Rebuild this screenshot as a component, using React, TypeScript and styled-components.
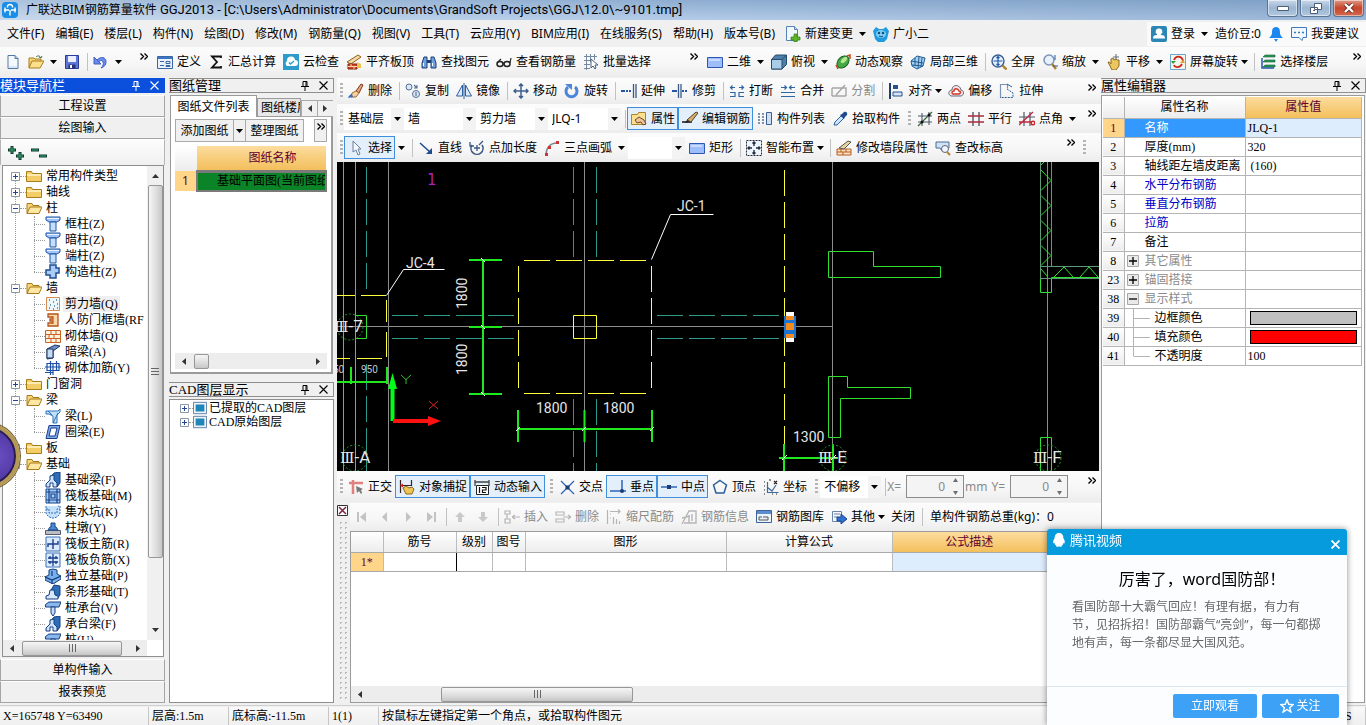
import React from "react";
import styled, { createGlobalStyle, css } from "styled-components";

const UI = `"Noto Sans", "Noto Sans CJK SC", sans-serif`;
const SONG = `"Liberation Serif", "Noto Sans CJK SC", serif`;

const Global = createGlobalStyle`
  * { box-sizing: border-box; }
  body { margin: 0; background: #f0f0f0; font: 12px/16px ${UI}; color: #000; }
  button, select, input { font: inherit; color: inherit; margin: 0; padding: 0; border: 0; background: none; border-radius: 0; }
  ul { list-style: none; margin: 0; padding: 0; }
  h1, h2, p { margin: 0; font-weight: normal; }
  svg { display: block; flex: none; }
`;

/* ---------- icons (16 x 16 grid) ---------- */

const B = "#2458a6";
const line = (d: string, c = B, w = 1.4, fill = "none") => (
  <path d={d} stroke={c} strokeWidth={w} fill={fill} />
);

const beam = (
  <>
    <path d="M5 6 9 1 15 0V11L12 15 9 8z" fill="#2c6fb8" stroke="#163f80" />
    <path d="M1 15V12L5 8V4L9 3V8L12 11V15H8V11H5V15Z" fill="#cfe4ff" stroke="#163f80" />
  </>
);
const column = (
  <>
    <path d="M1 1h14v3l-3 2H4L1 4z" fill="#9fc4f5" stroke="#1f55a5" />
    <path d="M5 6h6v9H5z" fill="#c5defc" stroke="#1f55a5" />
    <path d="M2 2.500h12" stroke="#e8f3ff" />
  </>
);

const ICONS: Record<string, React.ReactNode> = {
  app: (
    <>
      <rect width="16" height="16" rx="4" fill="#1a8de6" />
      <path d="M2 8h5M9 8h5M8 8v5.500M5.500 5.500V4.500a2.500 2 0 0 1 5 0v1M3 5.500v5M13 5.500v5" stroke="#fff" strokeWidth="1.400" fill="none" />
    </>
  ),
  fresh: (
    <>
      <path d="M3 1.500h7l3 3v10H3z" fill="#f4f9ff" stroke="#54789f" />
      <path d="M10 1.500v3h3" fill="#bcd5ee" stroke="#54789f" />
      <path d="M4 13h8" stroke="#bcd5ee" />
    </>
  ),
  open: (
    <>
      <path d="M1 14V4h5l1 1h6v3" fill="#f6d477" stroke="#a87c1b" />
      <path d="M1 14 4 7h12l-4 7z" fill="#fcdf8b" stroke="#a87c1b" />
      <path d="M8 3c2-2 4-1 5 1M14 2l-1 2-2-1" stroke="#3b7a35" fill="none" />
    </>
  ),
  save: (
    <>
      <path d="M1.500 1.500h13v13h-13z" fill="#5f76d8" stroke="#2b3c92" />
      <path d="M4 2h8v6H4z" fill="#e9efff" />
      <path d="M4.500 10.500h7v4h-7z" fill="#26347c" />
      <path d="M6 11h2v3H6z" fill="#fff" />
    </>
  ),
  undo: (
    <>
      <path d="M4 6c4-4 9-3 9 2 0 3-2 5-5 6 2-2 3-4 2-6-1-2-3-2-4 0z" fill="#6c8cec" stroke="#3d5fc4" />
      <path d="M1 3v7h7z" fill="#6c8cec" stroke="#3d5fc4" />
    </>
  ),
  define: (
    <>
      <path d="M.5 2.500h15v12H.5z" fill="#e8f1fc" stroke="#3b66a6" />
      <path d="M1 3h14v2H1z" fill="#3b76c4" />
      <path d="M3 7.500h4M3 11.500h4M9 7.500h4v2H9zM9 11.500h4v1H9z" stroke="#3b66a6" fill="none" />
    </>
  ),
  sigma: line("M13 4V2.500H4L9 8l-5 5.500h9V12", "#111", 1.800),
  cloud: (
    <>
      <path d="M0 0h16v16H0z" fill="#2e9cca" />
      <path d="M4 12a3 3 0 0 1 0-5 4 4 0 0 1 8-1 3 3 0 0 1 0 6z" fill="#fff" />
      {line("m6 8.500 1.500 1.500L11 7", "#2e9cca")}
    </>
  ),
  slab: (
    <>
      <path d="M1 8 12 1l3 2L5 10z" fill="#f4d9a4" stroke="#93611a" />
      <path d="M2 10h9v5H2z" fill="#d1432b" stroke="#7d2415" />
      <path d="M2 12.500h9M5 10v2M8 12v3" stroke="#ffd9a0" />
      <path d="m11 8 4 2v4h-4z" fill="#f1c04e" />
    </>
  ),
  binoc: (
    <>
      <path d="M1 14V9l2-6h3v11zM15 14V9l-2-6h-3v11z" fill="#6f9fdc" stroke="#1b3f77" />
      <path d="M6 6h4v3H6z" fill="#1b3f77" />
      <path d="M2.500 12V9M11.500 12V9" stroke="#fff" />
    </>
  ),
  glasses: (
    <>
      <ellipse cx="4" cy="10" rx="3" ry="2.500" fill="none" stroke="#222" strokeWidth="1.500" />
      <ellipse cx="11" cy="10" rx="3" ry="2.500" fill="none" stroke="#222" strokeWidth="1.500" />
      {line("M7 9h1M14 9 15 4M1 9 5 5", "#222", 1.200)}
    </>
  ),
  batch: (
    <>
      {line("M1 2.500h13M1 6.500h7M1 10.500h6M1 14.500h6M3.500 0v16M7.500 0v8M11.500 0v6", "#7687a0", 1)}
      <path d="M8 5v9l2-2 2 3 1-1-1-3h3z" fill="#fff" stroke="#49607f" />
    </>
  ),
  plane: (
    <>
      <path d="M.5 3.500h15v10H.5z" fill="#9dbdfb" stroke="#2e57b4" />
      <path d="M2 5h11v2H2z" fill="#c9dbff" />
    </>
  ),
  cube: (
    <>
      <path d="M.5 5.500 4.500 1h11v9.500L11 15H.5z" fill="#4d7fa9" stroke="#274b6c" />
      <path d="M.5 5.500H11V15H.5z" fill="#a9cde6" stroke="#274b6c" />
      <path d="M11 5.500 15.500 1" stroke="#274b6c" />
    </>
  ),
  orbit: (
    <>
      <ellipse cx="8" cy="8" rx="5" ry="7" transform="rotate(45 8 8)" fill="#43a845" stroke="#1c6323" />
      <ellipse cx="9" cy="6" rx="2" ry="4" transform="rotate(45 9 6)" fill="#b6e78f" />
      <path d="M3 15 1 11M12 2l3-1v4" stroke="#c84a1a" fill="none" strokeWidth="1.500" />
    </>
  ),
  cube3: (
    <>
      <path d="m1 7 6-5 8 2-2 8-6 3-5-3z" fill="#a6d2f0" stroke="#205b93" />
      {line("M5 4v8M9 3 8 14M12 4l-1 9M1 7l12 2M2 11l11 1", "#205b93", 1)}
    </>
  ),
  full: (
    <>
      <circle cx="7" cy="7" r="6" fill="#e3f0ff" stroke="#3c5f93" strokeWidth="1.400" />
      {line("M7 2.500v9M2.500 7h9M5.500 4 7 2.500 8.500 4M5.500 10 7 11.500 8.500 10", "#2458a6", 1.200)}
      {line("m11.500 11.500 4 4", "#b3822c", 2.400)}
    </>
  ),
  zoom: (
    <>
      <circle cx="7" cy="6" r="5" fill="#e6f1fc" stroke="#7e94b4" strokeWidth="1.500" />
      {line("m10 10 4 5", "#b3822c", 2.400)}
      {line("M13 1v5M11 12h5", B, 1)}
    </>
  ),
  hand: (
    <>
      <path d="M2 8c2 0 2 1 3 2V5l2-1 1 2 2-1 1 1h2v6l-3 4H6z" fill="#ecc65e" stroke="#8c6a1b" />
      {line("M10 0v6M7 3h6", "#5d6d82", 1)}
    </>
  ),
  screen: (
    <>
      <path d="M.5.500h15v15H.5z" fill="#f2f8e9" stroke="#6ea2cf" />
      {line("M4 6c2-5 8-4 9 1", "#d12828", 1.800)}
      {line("M12 10c-2 4-7 4-8 1", "#d12828", 1.800)}
      <path d="M1 7h5l-3 3z" fill="#2f9d3f" />
      <path d="M10 9h5l-2-3z" fill="#e59a2a" />
    </>
  ),
  floors: (
    <>
      <path d="M5 1h10v2H3zM5 6h10v2H3zM5 11h10v2H3z" fill="#2a9a58" stroke="#14603a" strokeWidth=".6" />
      <path d="M2 4v10h12" stroke="#2458a6" fill="none" strokeWidth="1.500" />
    </>
  ),
  docplus: (
    <>
      <path d="M1.500 .5h8l3 3v11h-11z" fill="#f0f8ff" stroke="#5683b3" />
      <path d="M9.500 .5v3h3" fill="#bcd5ee" stroke="#5683b3" />
      <path d="M9 8h3v3h3v3h-3v2H9v-2H6v-3h3z" fill="#5eb52a" stroke="#2f7a11" strokeWidth=".7" />
    </>
  ),
  mascot: (
    <>
      <path d="M0 5 3 1l3 2h4l3-2 3 4-2 8-3 3H5l-3-3z" fill="#219be0" />
      <ellipse cx="8" cy="8" rx="5" ry="4" fill="#7ccdf5" />
      <circle cx="6" cy="7" r="1.200" fill="#124a76" />
      <circle cx="10" cy="7" r="1.200" fill="#124a76" />
      {line("M6 10c1 1 3 1 4 0", "#124a76", 1)}
    </>
  ),
  user: (
    <>
      <rect width="16" height="16" rx="2" fill="#2b86b5" />
      <path d="M8 2.500a3 3 0 0 1 2 5.500v1c3 0 4 1 4 3.500H2C2 10 3 9 6 9V8a3 3 0 0 1 2-5.500z" fill="#fff" />
    </>
  ),
  bell: <path d="M8 1c4 0 4 4 4 6s1 3 3 5H1c2-2 3-3 3-5s0-6 4-6zM6 13h4l-2 3z" fill="#1a87ee" />,
  chat: (
    <>
      <path d="M.5 1.500h15v10H12l-1 3-3-3H.5z" fill="#f2f8ff" stroke="#3f79bd" />
      {line("M3 6.500h2M7 6.500h2M11 6.500h2", "#3f79bd", 1.500)}
    </>
  ),
  erase: (
    <>
      <path d="m8 8 5-7 2 1-4 8z" fill="#e9a47d" stroke="#7c3518" />
      <path d="m4 10 4-2 3 2-3 4H3z" fill="#f5d3a1" stroke="#a2672d" />
      <path d="M0 15c1-3 3-4 4-4l1 3z" fill="#356fc0" />
    </>
  ),
  copy: (
    <>
      <circle cx="4" cy="4" r="3" fill="#dce8f5" stroke="#536f94" />
      <circle cx="11" cy="11" r="3.500" fill="#dce8f5" stroke="#536f94" />
      {line("M9 2l3 3M12 2v3H9M11 9v4", "#536f94", 1.100)}
    </>
  ),
  mirror: (
    <>
      <path d="M6.500 2v11h-6zM9.500 2v11h6z" fill="#dcebfb" stroke="#2c5f9e" />
      {line("M8 0v16", "#2c5f9e", 1)}
    </>
  ),
  move: line("M8 1v14M1 8h14M6 3l2-2 2 2M6 13l2 2 2-2M3 6 1 8l2 2M13 6l2 2-2 2", "#3d5f8f", 1.500),
  rotate: (
    <>
      {line("M4 4a5.500 5.500 0 1 0 7 0", "#4c86d9", 3)}
      <path d="M1 1h7v6z" fill="#4c86d9" />
    </>
  ),
  extend: (
    <>
      {line("M0 8h4M5 8h2M8 8h2", B, 2)}
      {line("M12.500 1v14M15 1v14", "#3b5a86", 1.300)}
    </>
  ),
  trim: (
    <>
      {line("M0 8h5M10 8h2M13 8h2", B, 2)}
      {line("M6.500 1v14M9 1v14", "#3b5a86", 1.300)}
    </>
  ),
  brk: (
    <>
      {line("M1 9.500h5v4H1M15 9.500h-5v4h5", "#2f66a6", 1.200)}
      {line("M2 4.500h4M10 4.500h4M3.500 2.500l-2 2 2 2M12.500 2.500l2 2-2 2", "#2f66a6", 1.200)}
    </>
  ),
  merge: (
    <>
      {line("M1 9.500h14M1 13.500h14", "#2f66a6", 1.200)}
      {line("M1 4.500h5M10 4.500h5M4.500 2.500l2 2-2 2M11.500 2.500l-2 2 2 2", "#2f66a6", 1.200)}
    </>
  ),
  split: line("M1 5h10M1 13h14M1 5v8M5 12 14 2M11 5h4v8", "#a6a6a6", 1.400),
  align: (
    <>
      {line("M2 0v16", "#1f3f73", 2)}
      <path d="M5 2h5v4H5z" fill="#29518f" />
      <path d="M5 9h9v4H5z" fill="#d7e6f7" stroke="#29518f" />
    </>
  ),
  offset: (
    <>
      <path d="M3 13c-4-2-2-6 1-6 0-6 8-6 9 0 4 1 3 5 0 6z" fill="#fbe3e0" stroke="#5d6c85" />
      <path d="M5 11c-2-1-1-3 1-3 0-3 4-3 5 0 2 0 2 2 0 3z" fill="#fff" stroke="#d0362c" strokeWidth="1.400" />
    </>
  ),
  stretch: (
    <>
      {line("M1.500 14.500v-13h7v4", "#7d93b3", 1.200)}
      <path d="M8 6l6 4v4.500H1" stroke="#2c5f9e" fill="none" strokeDasharray="2 1" />
      <path d="M8 1l5 3" stroke="#2c5f9e" fill="none" />
    </>
  ),
  prop: (
    <>
      <path d="M.5 3.500h6l1-2h7v12H.5z" fill="#fbe08f" stroke="#b0832b" />
      <path d="m4 9 4-3 5 3 2 4-3 1-2-3-4 1z" fill="#f3c39b" stroke="#6c4a24" />
    </>
  ),
  edit: (
    <>
      <path d="M0 11h10" stroke="#222" strokeWidth="1.600" />
      <path d="m5 9 9-8 2 1-7 9z" fill="#d8b06c" stroke="#4c4030" />
      <path d="m3 12 2-3 3 2z" fill="#222" />
    </>
  ),
  list: (
    <>
      {line("M1 3h2M1 6h2M1 9h2M1 12h2M5 3h2M5 6h2M5 9h2M5 12h2", "#5a7396", 1.600)}
      <path d="M9.500 1.500h5v12h-5z" fill="#cfe0f5" stroke="#3d5f8f" />
    </>
  ),
  pick: (
    <>
      <path d="m2 14 1-3 6-6 3 2-7 7z" fill="#cde4fa" stroke="#2c5f9e" />
      <path d="m8 4 2-1 2-2c2-1 4 1 3 3l-2 2-1 2z" fill="#1e4b8d" />
    </>
  ),
  twopt: (
    <>
      {line("M5 2v13M12 1v13M1 5h14M1 11h14", "#4e5a6b", 1.100)}
      {line("M1 15 15 1", "#3b6c36", 1.300)}
      <circle cx="5" cy="11" r="1.500" fill="#111" />
      <circle cx="12" cy="4" r="1.500" fill="#111" />
    </>
  ),
  par: (
    <>
      {line("M5 1v14M11 1v14", "#4e5a6b", 1.400)}
      {line("M0 5h16M0 11h16", "#b02b3e", 1.400)}
    </>
  ),
  ang: (
    <>
      {line("M5 1v14M11 1v14M0 6h16", "#4e5a6b", 1.200)}
      {line("M0 14 14 1M0 11h12", "#c0283b", 1.300)}
      <circle cx="14" cy="12" r="1.800" fill="none" stroke="#d12828" strokeWidth="1.500" />
    </>
  ),
  select: <path d="M5 1v11l3-2 2 5 2-1-2-5h3z" fill="#f5f9ff" stroke="#6a7f9c" />,
  ray: (
    <>
      {line("M2 3 12 12", "#1e4b8d", 1.500)}
      <path d="M14 8v6H8z" fill="#1e4b8d" />
    </>
  ),
  arclen: (
    <>
      {line("M3 5a6 6 0 1 0 10 0", "#3b5a86", 1.600)}
      {line("M1 2v4h4M8 5v6M5 8h6M10 5l4-4", "#3b5a86", 1.300)}
    </>
  ),
  arc: (
    <>
      {line("M2 15C2 8 6 3 13 3", "#7c8492", 1.500)}
      <path d="M1 13h3v3H1zM4 6h3v3H4zM12 1h3v3h-3z" fill="#c93434" />
    </>
  ),
  smart: (
    <>
      <path d="M.5.500h15v15H.5z" fill="#eef5fd" stroke="#222c3d" strokeDasharray="2 1" />
      {line("M8 2v4M8 10v4M2 8h4M10 8h4M6.500 3.500 8 2l1.500 1.500M6.500 12.500 8 14l1.500-1.500M3.500 6.500 2 8l1.500 1.500M12.500 6.500 14 8l-1.500 1.500", "#222c3d", 1.400)}
    </>
  ),
  wall: (
    <>
      <path d="M1 9h14v6H1z" fill="#ffe3c8" stroke="#b55a1a" />
      <path d="M1 12h14M5 9v3M10 9v3M7 12v3" stroke="#b55a1a" />
      <path d="m3 8 9-7 3 1-7 7z" fill="#e9d49d" stroke="#555" />
    </>
  ),
  mark: (
    <>
      <path d="M1 2h13v6H9L7 11 5 8H1z" fill="#cfe2f7" stroke="#4b6c99" />
      <circle cx="10" cy="9" r="3.500" fill="#eef6ff" stroke="#667" />
      {line("m12 12 3 3", "#b3822c", 2)}
    </>
  ),
  ortho: (
    <>
      {line("M1 4h14M5 1v14", "#e28080", 2.500)}
      <path d="m8 7 1 7 2-2 2 3 1-1-1-3 2-1z" fill="#777" />
    </>
  ),
  snap: (
    <>
      {line("M1.500 1v13M12.500 1v6M1 6.500h11", "#3b2020", 1.200)}
      <path d="m4 9 3-2 3 2 3-1 2 2-2 5H7z" fill="#efc653" stroke="#8c6a1b" />
      <path d="m1 6.500 3-2v4z" fill="#c22" />
    </>
  ),
  dyn: (
    <>
      {line("M1 1v6M15 1v6M1 3h14", "#444", 1.300)}
      <path d="M2.500 6.500h12v9h-12z" fill="#fff" stroke="#222" />
      {line("M5.500 8v6M8 8.500h4v2.500H8.500v2.500H12", "#111", 1.200)}
    </>
  ),
  cross: (
    <>
      {line("m2 2 13 13M15 2 2 15", "#2f66b8", 1.300)}
      <path d="M6.500 6.500h4v4h-4z" fill="#1d3c77" />
    </>
  ),
  perp: (
    <>
      {line("M0 12h16M12 1v11", "#2f66b8", 1.500)}
      <circle cx="12" cy="12" r="2" fill="#1d3c77" />
    </>
  ),
  mid: (
    <>
      {line("M0 8h16", "#2f66b8", 1.500)}
      <path d="M6 6h4v4H6z" fill="#1d3c77" />
    </>
  ),
  vertex: line("M8 1.500 14.500 6 12 14H4L1.500 6z", "#2c5f9e", 1.500),
  coord: (
    <>
      {line("M4.500 3v10.500h11M4 8l5 4 4-6", "#3d6a9e", 1.200)}
      {line("M1 3h1M1 7h1M1 11h1M1 15h1M6 1h2M11 2l3 3M14 2l-3 3M9 15h1M13 15h1", "#222", 1.200)}
    </>
  ),
  first: <path d="M3 3h2v10H3zM12 3v10L6 8z" fill="#c3c3c3" />,
  prev: <path d="M10 3v10L5 8z" fill="#c3c3c3" />,
  next: <path d="M6 3v10l5-5z" fill="#c3c3c3" />,
  last: <path d="M4 3v10l6-5zM11 3h2v10h-2z" fill="#c3c3c3" />,
  up: <path d="m8 3 5 5h-3v5H6V8H3z" fill="#c9c9c9" />,
  down: <path d="m8 13 5-5h-3V3H6v5H3z" fill="#c9c9c9" />,
  insert: line("M1 2h5v3H1zM1 10h5v4H1zM8 8h8M8 8l3-2M8 8l3 2M3 5v5", "#b5b5b5", 1.200),
  remove: line("M1 3h8v3H1zM1 10h8v3H1zM8 8h8M13 6l3 2-3 2", "#b5b5b5", 1.200),
  scale: line("M1.500 1v14M4 5h1M4 9h1M7.500 8v7M10.500 10v5M13.500 12v3M4 2.500h10M12 .5l2 2-2 2", "#b5b5b5", 1.200),
  info: line("M1 15 8 2h7v12H8V6M1 9l8-2M3 14h5M11 5v7", "#b5b5b5", 1.400),
  lib: (
    <>
      <path d="M.5 1.500h15v12H.5z" fill="#eaf2fb" stroke="#3c6299" />
      <path d="M1 2h14v3H1z" fill="#5b8ccd" />
      {line("M3 11V8h3M7 8h5v3M3 11h9", "#555", 1)}
    </>
  ),
  other: (
    <>
      <path d="M1.500 2.500h9v10h-9z" fill="#f4f8fd" stroke="#6b84a8" />
      {line("M3 5h6M3 8h4", "#6b84a8", 1)}
      <path d="M6 8h4V5l6 5-6 5v-3H6z" fill="#2f70d0" stroke="#1b4690" />
    </>
  ),
  qq: <path d="M8 0c4 0 5 3 5 6 2 3 2 5 1 6l-1-1c0 2-1 3-2 3 2 2-2 2-3 1-1 1-5 1-3-1-1 0-2-1-2-3l-1 1c-1-1-1-3 1-6 0-3 1-6 5-6z" fill="#fff" />,
  star: <path d="m8 1 2 5 5 .5-4 3.500 1.500 5L8 12l-4.500 3L5 10 1 6.500 6 6z" fill="none" stroke="#fff" strokeWidth="1.600" />,
  folder: (
    <>
      <path d="M.5 13.500v-10h5l1 2h9v8z" fill="#f3cd66" stroke="#a87c1b" />
      <path d="M1 6h14v2H1z" fill="#fdebb0" />
    </>
  ),
  folderOpen: (
    <>
      <path d="M1 13.500v-10h5l1 2h6v2" fill="#f6d477" stroke="#a87c1b" />
      <path d="m1 13.500 3-6.500h12l-3 6.500z" fill="#fde7a2" stroke="#a87c1b" />
    </>
  ),
  column,
  beam,
  shape: <path d="M5 1h6v3h3v5h-3v5H5v-3H1V6h4z" fill="#a9ccf7" stroke="#1f4d92" strokeWidth="1.500" />,
  shear: (
    <>
      <path d="M1.500 1.500h13v13h-13z" fill="#edf6f8" stroke="#d98b4e" />
      {line("M4 4h1M8 6h1M11 4h1M5 9h1M9 10h1M12 8h1M4 12h1M8 13h1M12 12h1", "#3d7c93", 1.300)}
    </>
  ),
  door: <path d="M3 2h10v12H3v-3h5V9H5V7h3V5H3z" fill="#ffd5ae" stroke="#b0561a" strokeWidth="1.300" />,
  brick: (
    <>
      <path d="M.5 2.500h15v12H.5z" fill="#fff0e0" stroke="#c8641e" />
      <path d="M1 6.500h14M1 10.500h14M6 3v3M11 3v3M4 7v3M9 7v3M6 11v3M11 11v3" stroke="#c8641e" />
    </>
  ),
  hidden: (
    <>
      <path d="m2 5 8-4 5 1-7 5v7l-6 1z" fill="#6c8fc6" stroke="#1d3461" />
      <path d="M2 5h6v9H2z" fill="#c7dbf5" stroke="#1d3461" />
    </>
  ),
  rebarwall: line("M2 3.500h12v7H2zM0 7h16M5.500 1v14M11.500 1v10M8 4v11M0 12.500h8", "#1b4fa8", 1.200),
  beamL: (
    <>
      <path d="M1 3h12l2-2v3l-3 3v8H8V8L4 6H1z" fill="#bfe0fb" stroke="#2c72b5" />
      {line("m3 3 4 4M8 15l5-10", "#2c72b5", 1)}
    </>
  ),
  ring: <path d="M4 1.500h11l-3 13H1zM6 4h6l-2 8H4z" fillRule="evenodd" fill="#7fa8e6" stroke="#183f8c" />,
  raft: (
    <>
      <path d="M1 1h14v14H1z" fill="#a6cdf7" stroke="#14418a" />
      {line("M4 1v14M12 1v14M1 4h14M1 12h14M6 6h4v4H6z", "#14418a", 1.200)}
    </>
  ),
  pit: <path d="M1 2v7c1 3 4 5 7 5s6-2 7-5V2h-2M1 5h3v4h8V5h3" fill="#c6e2fb" stroke="#2f6fb8" strokeDasharray="2 1" />,
  pier: (
    <>
      <path d="M.5 10.500h15v4H.5z" fill="#b8bdc6" stroke="#555d6b" />
      <path d="m3 10 2-3h1V3h4v4h1l2 3z" fill="#4b89d6" stroke="#174587" />
    </>
  ),
  rebarM: (
    <>
      <path d="M1 1h14v14H1z" fill="#dbeafc" stroke="#3a6fb8" />
      {line("M8 3v10M3 11V8h10V5", "#1b3f8a", 1.400)}
    </>
  ),
  rebarN: (
    <>
      <path d="M1 1h14v14H1z" fill="#dbeafc" stroke="#3a6fb8" />
      {line("M8 2v12M3 6h10M3 10h10M5 4v3M11 4v3M5 9v3M11 9v3", "#1b3f8a", 1.300)}
    </>
  ),
  single: (
    <>
      <path d="m0 9 4-2V2l4-1 4 1v4l4 2v3l-8 5-8-4z" fill="#77b0ea" stroke="#123b7c" />
      {line("m0 9 7 3 9-4M7 12v4M7 3v5", "#123b7c", 1.200)}
    </>
  ),
  strip: (
    <>
      <path d="M5 8 9 1l6 1v9l-3 4z" fill="#2c6fb8" stroke="#163f80" />
      <path d="M1 15v-3l3-1 1-5h4l1 5 3 1v3z" fill="#d5e8ff" stroke="#163f80" />
    </>
  ),
  pile: (
    <>
      <path d="M.5 4.500 4 2h12l-2 5H.5z" fill="#88b8ee" stroke="#163f80" />
      <path d="M6 7h4v6l-2 3-2-3z" fill="#bfdcff" stroke="#163f80" />
    </>
  ),
  layer: (
    <>
      <path d="M.5 1.500h15v13H.5z" fill="#eef3fa" stroke="#51719c" />
      <path d="M3 4h10v8H3z" fill="#1f86b8" />
    </>
  ),
  plusplus: (
    <>
      {line("M0 5h8M4 1v8M8 11h8M12 7v8", "#0b3b2e", 3)}
      {line("M1 5h6M4 2v6M9 11h6M12 8v6", "#38a86b", 1)}
    </>
  ),
  minusminus: (
    <>
      {line("M0 5h8M8 11h8", "#0b3b2e", 3)}
      {line("M1 5h6M9 11h6", "#38a86b", 1)}
    </>
  ),
};

const Icon = ({ name, size = 16 }: { name: string; size?: number }) => (
  <svg width={size} height={size} viewBox="0 0 16 16" aria-hidden="true">
    {ICONS[name]}
  </svg>
);

const Down = () => (
  <svg width="7" height="4" viewBox="0 0 7 4" aria-hidden="true"><path d="M0 0h7L3.500 4z" fill="#000" /></svg>
);

const Cross = ({ color = "#000" }: { color?: string }) => (
  <svg width="9" height="9" viewBox="0 0 9 9" aria-hidden="true"><path d="m.5.500 8 8m0-8-8 8" stroke={color} strokeWidth="1.100" /></svg>
);

const Pin = ({ color = "#000" }: { color?: string }) => (
  <svg width="8" height="10" viewBox="0 0 8 10" aria-hidden="true"><path d="M2 .5h4v5H2zM0 5.500h8M4 6v4M5 1v4" stroke={color} fill="none" /></svg>
);

/* ---------- frame ---------- */

const Frame = styled.div`
  height: 100vh;
  display: flex;
  flex-direction: column;
  overflow: hidden;
  background: #f0f0f0;
  white-space: nowrap;
`;

const TitleBar = styled.header`
  height: 20px;
  flex: none;
  display: flex;
  align-items: center;
  gap: 8px;
  padding: 0 2px;
  background: linear-gradient(90deg, rgba(255, 255, 255, 0.25), transparent 50%, rgba(60, 100, 150, 0.2)),
    linear-gradient(#8eadd1, #b4cce8);
`;

const TitleText = styled.h1`
  flex: 1;
  font-size: 12px;
  line-height: 16px;
  span { font-family: Roboto, "Noto Sans", sans-serif; font-size: 13px; }
`;

const WindowButtons = styled.div`
  display: flex;
  gap: 2px;
  align-self: flex-start;
`;

const WinButton = styled.button<{ $danger?: boolean }>`
  width: 31px;
  height: 17px;
  display: flex;
  align-items: center;
  justify-content: center;
  border: 1px solid #5c7592;
  border-top: 0;
  border-radius: 0 0 4px 4px;
  box-shadow: inset 0 0 0 1px rgba(255, 255, 255, 0.5);
  background: ${(p) => (p.$danger ? "linear-gradient(#e09a86, #c5452b 50%, #d2694f)" : "linear-gradient(#c9d9eb, #9cb5d1 50%, #b2c8e0)")};
`;

const MenuBar = styled.nav`
  height: 27px;
  flex: none;
  display: flex;
  align-items: center;
  padding-left: 2px;
`;

const MenuItem = styled.button`
  padding: 0 5px;
  margin-right: 1px;
  line-height: 20px;
`;

const Account = styled.div`
  margin-left: auto;
  height: 24px;
  display: flex;
  align-items: center;
  padding-right: 4px;
  background: #fafafa;
`;

/* ---------- toolbars ---------- */

const ToolbarLine = styled.div`
  height: 30px;
  flex: none;
  display: flex;
`;

const barFill = css`
  display: flex;
  align-items: center;
  background: linear-gradient(#fcfcfc, #f6f6f6 60%, #ececec);
  overflow: hidden;
`;

const Bar = styled.div<{ $w?: number; $pad?: number }>`
  ${barFill}
  ${(p) => (p.$w ? `width: ${p.$w}px; flex: none;` : "flex: 1; min-width: 0;")}
  height: 30px;
  padding-left: ${(p) => p.$pad ?? 0}px;
`;

const DockBar = styled.div<{ $h: number; $end?: number }>`
  ${barFill}
  flex: none;
  height: ${(p) => p.$h}px;
  padding-right: ${(p) => p.$end ?? 0}px;
`;

const ToolButton = styled.button<{ $active?: boolean; $off?: boolean }>`
  flex: none;
  display: flex;
  align-items: center;
  gap: 4px;
  height: 23px;
  padding: 0 3px 0 4px;
  ${(p) => p.$off && "color: #8a8a8a;"}
  ${(p) => p.$active && css`
    background: #e3effb;
    box-shadow: inset 0 0 0 1px #3f8fdc;
  `}
`;

const Tool = ({ icon, active, off, children, label }: { icon?: string; active?: boolean; off?: boolean; children?: React.ReactNode; label?: string }) => (
  <ToolButton type="button" $active={active} $off={off} aria-label={label}>
    {icon && <Icon name={icon} />}
    {children && <span>{children}</span>}
  </ToolButton>
);

const Total = styled.span`
  padding-left: 6px;
`;

const CaretButton = styled.button<{ $tight?: boolean }>`
  flex: none;
  height: 23px;
  display: flex;
  align-items: center;
  width: ${(p) => (p.$tight ? 9 : 13)}px;
  padding-left: ${(p) => (p.$tight ? 0 : 3)}px;
`;

const Caret = ({ tight }: { tight?: boolean }) => (
  <CaretButton type="button" $tight={tight} aria-label="更多选项"><Down /></CaretButton>
);

const Sep = styled.span`
  flex: none;
  width: 1px;
  height: 18px;
  margin: 0 1px 0 4px;
  background: #c2c2c2;
`;

const Grip = styled.span<{ $mid?: boolean }>`
  flex: none;
  width: 3px;
  height: 16px;
  margin: ${(p) => (p.$mid ? "0 2px 0 5px" : "0 1px 0 3px")};
  background: repeating-linear-gradient(#b4b4b4 0 2px, transparent 2px 4px);
`;

const MoreButton = styled.button`
  align-self: flex-start;
  margin: 5px 5px 0 auto;
  width: 8px;
  height: 8px;
`;

const Chevrons = () => (
  <svg width="8" height="7" viewBox="0 0 8 7" aria-hidden="true"><path d="m.5.500 3 3-3 3M4.500.500l3 3-3 3" stroke="#000" strokeWidth="1.400" fill="none" /></svg>
);

const More = () => (
  <MoreButton type="button" aria-label="展开工具栏"><Chevrons /></MoreButton>
);

const ComboBox = styled.label<{ $w: number }>`
  flex: none;
  position: relative;
  display: flex;
  align-items: center;
  justify-content: flex-end;
  width: ${(p) => p.$w}px;
  height: 22px;
  padding-right: 3px;
  background: linear-gradient(90deg, #fff calc(100% - 13px), #f3f3f3 0);
  select {
    position: absolute;
    inset: 0;
    width: 100%;
    padding-left: 4px;
    appearance: none;
    line-height: 20px;
  }
`;

const Combo = ({ w, value, label }: { w: number; value: string; label: string }) => (
  <ComboBox $w={w}>
    <select aria-label={label} defaultValue={value}><option>{value}</option></select>
    <Down />
  </ComboBox>
);

const Axis = styled.label`
  flex: none;
  display: flex;
  align-items: center;
  gap: 5px;
  color: #8a8a8a;
`;

const SpinBox = styled.span`
  display: flex;
  align-items: center;
  gap: 7px;
  width: 58px;
  height: 23px;
  border: 1px solid #8b8b8b;
  background: #f4f4f4;
  padding: 0 4px;
  input { width: 34px; text-align: right; }
`;

const Spin = ({ label }: { label: string }) => (
  <Axis>
    {label}
    <SpinBox>
      <input type="text" defaultValue="0" />
      <svg width="7" height="17" viewBox="0 0 7 17"><path d="M1 4 3.500 0 6 4zM1 13l2.500 4L6 13z" fill="#6e6e6e" /></svg>
    </SpinBox>
  </Axis>
);

const Unit = styled.span`
  color: #8a8a8a;
  margin: 0 4px 0 1px;
`;

/* ---------- panels ---------- */

const Main = styled.main`
  flex: 1;
  min-height: 0;
  display: flex;
  padding-top: 1px;
`;

const Column = styled.section<{ $w?: number; $gap?: number }>`
  position: relative;
  display: flex;
  flex-direction: column;
  ${(p) => (p.$w ? `width: ${p.$w}px; flex: none;` : "flex: 1; min-width: 0;")}
  margin-right: ${(p) => p.$gap ?? 0}px;
  padding-bottom: 2px;
`;

const Spacer = styled.div`
  flex: 1;
`;

const PanelHead = styled.div<{ $blue?: boolean }>`
  flex: none;
  height: 15px;
  display: flex;
  align-items: center;
  gap: 10px;
  padding-right: 5px;
  border: 1px solid ${(p) => (p.$blue ? "#0a50dc" : "#8f8f8f")};
  border-left: 0;
  background: ${(p) => (p.$blue ? "#0a50dc" : "#f0f0f0")};
  color: ${(p) => (p.$blue ? "#fff" : "#000")};
  margin-bottom: 2px;
  h2 { flex: 1; font: 13px/13px ${SONG}; }
  button { display: flex; }
`;

const Head = ({ title, blue }: { title: string; blue?: boolean }) => (
  <PanelHead $blue={blue}>
    <h2>{title}</h2>
    <button type="button" aria-label="固定"><Pin color={blue ? "#fff" : "#000"} /></button>
    <button type="button" aria-label="关闭"><Cross color={blue ? "#fff" : "#000"} /></button>
  </PanelHead>
);

const NavButton = styled.button`
  flex: none;
  height: 22px;
  border: 1px solid #a5a5a5;
  border-top-color: #fff;
  background: #f0f0f0;
`;

const TreeTools = styled.div`
  flex: none;
  height: 26px;
  display: flex;
  align-items: center;
  gap: 7px;
  padding-left: 7px;
  border: 1px solid #b5b5b5;
  border-bottom: 0;
  border-top-color: #fff;
  background: linear-gradient(#fdfdfd, #f0f0f0);
  button { display: flex; }
`;

const TreeBox = styled.div`
  flex: 1;
  min-height: 0;
  margin: 0 1px 2px 2px;
  border: 1px solid #8f8f8f;
  background: #fff;
  display: grid;
  grid-template: minmax(0, 1fr) 16px / minmax(0, 1fr) 16px;
`;

const TreeList = styled.ul`
  position: relative;
  overflow: hidden;
  padding-top: 2px;
  font-family: ${SONG};
  &::before {
    content: "";
    position: absolute;
    left: 12px;
    top: 12px;
    bottom: 0;
    border-left: 1px dotted #9a9a9a;
  }
`;

const TreeRow = styled.div`
  position: relative;
  height: 16px;
  display: flex;
  align-items: center;
  padding-left: 8px;
`;

const Expander = styled.button`
  flex: none;
  width: 9px;
  height: 9px;
`;

const Box = ({ open }: { open?: boolean }) => (
  <Expander type="button" aria-label={open ? "折叠" : "展开"}>
    <svg width="9" height="9" viewBox="0 0 9 9">
      <path d="M.5.500h8v8h-8z" fill="#fff" stroke="#8c96a6" />
      <path d={open ? "M2 4.500h5" : "M2 4.500h5M4.500 2v5"} stroke="#26439b" />
    </svg>
  </Expander>
);

const Dots = styled.span<{ $w: number }>`
  flex: none;
  width: ${(p) => p.$w}px;
  border-top: 1px dotted #9a9a9a;
`;

const TreeText = styled.span<{ $on?: boolean }>`
  margin-left: 2px;
  padding: 0 2px;
  background: ${(p) => (p.$on ? "#efefef" : "transparent")};
`;

const SubList = styled.ul`
  position: relative;
  &::before {
    content: "";
    position: absolute;
    left: 31px;
    top: 0;
    bottom: 8px;
    border-left: 1px dotted #9a9a9a;
  }
  ${TreeRow} { padding-left: 31px; }
`;

const tree: { name: string; open?: boolean; items?: [string, string][] }[] = [
  { name: "常用构件类型" },
  { name: "轴线" },
  { name: "柱", open: true, items: [["框柱(Z)", "column"], ["暗柱(Z)", "column"], ["端柱(Z)", "column"], ["构造柱(Z)", "shape"]] },
  { name: "墙", open: true, items: [["剪力墙(Q)", "shear"], ["人防门框墙(RF", "door"], ["砌体墙(Q)", "brick"], ["暗梁(A)", "hidden"], ["砌体加筋(Y)", "rebarwall"]] },
  { name: "门窗洞" },
  { name: "梁", open: true, items: [["梁(L)", "beamL"], ["圈梁(E)", "ring"]] },
  { name: "板" },
  {
    name: "基础",
    open: true,
    items: [["基础梁(F)", "beam"], ["筏板基础(M)", "raft"], ["集水坑(K)", "pit"], ["柱墩(Y)", "pier"], ["筏板主筋(R)", "rebarM"], ["筏板负筋(X)", "rebarN"], ["独立基础(P)", "single"], ["条形基础(T)", "strip"], ["桩承台(V)", "pile"], ["承台梁(F)", "beam"], ["桩(U)", "pile"]],
  },
];

const VScroll = styled.div`
  background: #f0f0f0;
  display: flex;
  flex-direction: column;
  align-items: center;
  padding: 7px 0;
`;

const HScroll = styled.div`
  flex: none;
  height: 16px;
  background: #ededed;
  display: flex;
  align-items: center;
  padding: 0 5px;
`;

const Thumb = styled.div<{ $len: number; $off: number; $v?: boolean }>`
  flex: none;
  display: flex;
  align-items: center;
  justify-content: center;
  border: 1px solid #979797;
  border-radius: 2px;
  ${(p) =>
    p.$v
      ? `width: 15px; height: ${p.$len}%; margin-top: ${p.$off}px; background: linear-gradient(90deg, #f6f6f6, #dcdcdc 60%, #c6c6c6);`
      : `height: 15px; width: ${p.$len}px; margin: 0 auto 0 ${p.$off}px; background: linear-gradient(#f6f6f6, #dcdcdc 60%, #c6c6c6);`}
`;

const Arrow = ({ dir }: { dir: "l" | "r" | "u" | "d" }) => {
  const d = { l: "M6 0v7L2 3.500z", r: "M1 0v7l4-3.500z", u: "M0 5h7L3.500 1z", d: "M0 2h7L3.500 6z" }[dir];
  return <svg width="7" height="7" viewBox="0 0 7 7" aria-hidden="true"><path d={d} fill="#333" /></svg>;
};

const Ridges = ({ v }: { v?: boolean }) => (
  <svg width="8" height="8" viewBox="0 0 8 8" aria-hidden="true">
    <path d={v ? "M0 1.500h8M0 4.500h8M0 7.500h8" : "M1.500 0v8M4.500 0v8M7.500 0v8"} stroke="#666" />
  </svg>
);

const Orb = styled.div`
  position: absolute;
  left: -46px;
  top: 345px;
  width: 66px;
  height: 66px;
  border-radius: 50%;
  border: 4px solid #b49a55;
  box-shadow: inset 0 0 0 2px #2a1c50, 0 0 0 1px #6b5a2f;
  background: radial-gradient(circle at 65% 50%, #6a4fc0, #3c2590);
`;

const SheetPane = styled.div`
  flex: none;
  height: 279px;
  display: flex;
  flex-direction: column;
  margin: 0 1px 8px;
`;

const Tabs = styled.div`
  display: flex;
  align-items: flex-end;
  height: 22px;
  overflow: hidden;
`;

const Tab = styled.button<{ $on?: boolean }>`
  height: ${(p) => (p.$on ? 22 : 19)}px;
  ${(p) => (p.$on ? "flex: none; width: 87px;" : "flex: 1; min-width: 0; overflow: hidden; text-align: left; padding-left: 3px;")}
  border: 1px solid #9b9b9b;
  border-bottom: ${(p) => (p.$on ? "0" : "1px solid #9b9b9b")};
  background: ${(p) => (p.$on ? "#fff" : "#e8e8e8")};
`;

const SmallButton = styled.button<{ $w: number; $h?: number }>`
  flex: none;
  display: flex;
  align-items: center;
  justify-content: center;
  width: ${(p) => p.$w}px;
  height: ${(p) => p.$h ?? 23}px;
  border: 1px solid #a9a9a9;
  margin-right: -1px;
  background: #f0f0f0;
`;

const SheetBody = styled.div`
  flex: 1;
  min-height: 0;
  display: flex;
  flex-direction: column;
  padding: 2px 4px 3px;
  border: 1px solid #9b9b9b;
  border-top: 0;
  border-right-width: 2px;
  border-bottom-width: 2px;
  background: #fff;
`;

const SheetTools = styled.div`
  display: flex;
  margin-bottom: 4px;
  button:last-child { margin-left: auto; margin-right: 0; align-items: flex-start; padding-top: 3px; }
`;

const orange = "linear-gradient(#fcdc9e, #f3bf5c)";
const grayCell = "linear-gradient(#fff, #ececec)";

const SheetTable = styled.table`
  width: 100%;
  table-layout: fixed;
  border-collapse: collapse;
  thead th { height: 25px; background: ${orange}; color: #600030; font-weight: normal; padding: 0 0 0 22px; }
  thead th:first-child { width: 22px; padding: 0; background: ${grayCell}; }
  tbody th { height: 20px; background: #ffd58a; color: #600030; font-weight: normal; padding: 0; }
  tbody td { border: 2px solid #7a7a7a; border-top-width: 3px; background: #0a8427; padding: 0 0 0 19px; font-family: ${SONG}; overflow: hidden; line-height: 15px; }
`;

const LayerList = styled.ul`
  flex: 1;
  border: 1px solid #8f8f8f;
  background: #fff;
  padding: 1px 0 0 10px;
  font-family: ${SONG};
  li { display: flex; align-items: center; height: 14px; }
  li > :last-child { margin-left: 2px; }
`;

/* ---------- drawing ---------- */

const Canvas = styled.div`
  flex: 1;
  min-height: 0;
  margin-right: 2px;
  background: #000;
  overflow: hidden;
`;

const G = "#2fe02f";
const dash = "26 6";

const AxisName = ({ x, y, end }: { x: number; y: number; end: string }) => (
  <text x={x} y={y}>
    <tspan fontFamily={`"DejaVu Serif", serif`} fontSize="15">Ⅲ</tspan>
    -{end}
  </text>
);

const Plan = () => (
  <svg width="100%" height="100%" fill="none" strokeWidth="1" fontFamily={`Roboto, "Noto Sans", sans-serif`} role="img" aria-label="基础平面图">
    <g stroke="#2d9c8c" strokeDasharray={dash}>
      <path d="M29.500 5V134M29.500 202V309M236.500 5V96M259.500 5V96M236.500 237V309M259.500 237V309" />
      <path d="M55 153.500H178M55 176.500H178M320 153.500H442M320 176.500H442" />
    </g>
    <g stroke="#8c8c8c">
      <path d="M51.500 0V309M247.500 0V309M495.500 0V309M710.500 0V309M0 164.500H495" />
    </g>
    <path d="M6.500 0V309M18.500 0V309" stroke={G} />
    <g stroke="#ffff3c">
      <path d="M0 133.500H18M24 133.500H49M49.500 138V160M49.500 170V195M0 196.500H13M20 196.500H45" />
      <path d="M187 98.500H314M187 231.500H314M181.500 104V231M314.500 104V231" strokeDasharray={dash} />
      <path d="M447.500 8V282" strokeDasharray={dash} />
      <path d="M236.500 153.500h23v23h-23z" />
    </g>
    <path d="M376.500 52.500H333.500L314.500 97.500M107.500 107.500H66.500L49.500 133.500" stroke="#fff" />
    <g stroke="#1fe81f" strokeWidth="2">
      <path d="M146 98V232M132 98h33M132 165h33M132 232h33M181 267H315M181 248v32M247.500 248v32M315 248v32" />
      <path d="M0 220H50M14 205v17M50 205v17M442 296H501M447 282v27M496 282v27" />
    </g>
    <g stroke="#fff">
      <path d="m144 96 4 4m-4 63 4 4m-4 63 4 4M179 269l4-4m62 4 4-4m64 4 4-4M445 298l5-5m44 5 5-5" />
    </g>
    <g stroke={G}>
      <path d="M18 153.500h11.500v23H18" />
      <path d="M491.500 89.500h45v15h67v11h-112zM491.500 214.500h19v11h63v11h-70v39h-12zM703.500 309V275.500h11V309" />
      <path d="M703.500 116V130.500h11V115.500H762" />
      <path d="m704 3 3-3M704 8l10 10.500-10 10M704 33.500l10 10-10 10M704 58.500l10 10-10 10M704 83.500l10 10-10 10M704 107l7 8M717 115l10-10 9 10M743 115l9-10 9 10" />
      <g stroke="#23962a" strokeDasharray="2 2">
        <circle cx="13" cy="165" r="13" />
        <circle cx="18" cy="296" r="13" />
        <circle cx="496" cy="296" r="13" />
        <circle cx="711" cy="296" r="13" />
      </g>
    </g>
    <path d="M703.500 0V116M714.500 0V104.500M703 104.500H762M703 116.500H762" stroke="#5f9a78" />
    <path d="M55.500 259V226" stroke="#00ff18" strokeWidth="4" />
    <path d="M51 227 55.500 211 60 227z" fill="#00ff18" />
    <path d="M56 259H92" stroke="#f11" strokeWidth="4" />
    <path d="m91 254 13 5-13 5z" fill="#f11" />
    <path d="m64 213 5 4.500 5-4.500M69 217v5" stroke="#2fbf2f" />
    <path d="m92 239 9 8m0-8-9 8" stroke="#d22" />
    <path d="M447 154h12v22h-12z" fill="#1b74d0" />
    <path d="M449 154h8v4h-8zM449 161h8v7h-8zM449 172h8v4h-8z" fill="#f58a1e" />
    <path d="M449 150h8v4h-8zM449 176h8v4h-8z" fill="#fff" />
    <g fill="#e6e6e6" fontSize="14">
      <text x="340" y="49">JC-1</text>
      <text x="69" y="106">JC-4</text>
      <text x="199" y="251">1800</text>
      <text x="266" y="251">1800</text>
      <text x="456" y="280">1300</text>
      <text transform="translate(130 147) rotate(-90)">1800</text>
      <text transform="translate(130 213) rotate(-90)">1800</text>
    </g>
    <g fill="#e6e6e6" fontSize="17">
      <AxisName x={-3} y={170} end="7" />
      <AxisName x={3} y={301} end="A" />
      <AxisName x={481} y={301} end="E" />
      <AxisName x={696} y={301} end="F" />
    </g>
    <g fill="#c4c4c4" fontSize="10">
      <text x="-4" y="211">50</text>
      <text x="24" y="211">950</text>
    </g>
    <text x="90" y="23" fontSize="15" fontFamily={`"DejaVu Sans", sans-serif`} fill="#b11fb8">1</text>
  </svg>
);

/* ---------- rebar table ---------- */

const RebarPane = styled.div`
  flex: none;
  height: 201px;
  display: flex;
  padding-top: 1px;
`;

const RebarGrip = styled.div`
  flex: none;
  width: 13px;
  padding-top: 2px;
  button { display: flex; margin-bottom: 4px; }
  &::after {
    content: "";
    display: block;
    width: 9px;
    height: 180px;
    margin-left: 1px;
    background: radial-gradient(circle, #b8b8b8 1px, transparent 1px) 0 0 / 5px 5px;
  }
`;

const RebarBody = styled.div`
  flex: 1;
  min-width: 0;
  display: flex;
  flex-direction: column;
`;

const RebarArea = styled.div`
  flex: 1;
  min-height: 0;
  border: 1px solid #9b9b9b;
  border-right: 0;
  background: #fff;
  display: flex;
  flex-direction: column;
  justify-content: space-between;
`;

const RebarTable = styled.table`
  width: 100%;
  table-layout: fixed;
  border-collapse: collapse;
  th, td { border-right: 1px solid #bcbcbc; border-bottom: 1px solid #a9a9a9; padding: 0; font-weight: normal; text-align: center; }
  thead th { height: 20px; background: ${grayCell}; }
  thead th:last-child { background: ${orange}; color: #600030; padding-right: 54px; }
  tbody th { height: 19px; background: #ffd58a; color: #600030; font-family: ${SONG}; }
  tbody td:nth-child(2) { border-right-color: #000; }
  tbody td:last-child { background: #deedfd; }
`;

const Col = styled.col<{ $w: number }>`
  width: ${(p) => p.$w}px;
`;

/* ---------- property editor ---------- */

const PropBox = styled.div`
  flex: 1;
  border: 1px solid #9b9b9b;
  background: #fff;
  padding: 1px 2px 0 1px;
  margin: 0 1px 0 0;
`;

const PropTable = styled.table`
  width: 100%;
  table-layout: fixed;
  border-collapse: collapse;
  font-family: ${SONG};
  th, td { border-right: 1px solid #b4b4b4; border-bottom: 1px solid #b4b4b4; font-weight: normal; text-align: left; padding: 0; line-height: 16px; }
  thead th { height: 21px; text-align: center; background: ${grayCell}; }
  thead th:last-child { background: ${orange}; color: #600030; }
`;

const NumCell = styled.th<{ $on?: boolean }>`
  && { text-align: center; }
  height: 19px;
  background: ${(p) => (p.$on ? "#ffd58a" : grayCell)};
  color: ${(p) => (p.$on ? "#600030" : "#000")};
`;

const NameCell = styled.td<{ $tone?: string; $on?: boolean }>`
  color: ${(p) => (p.$on ? "#fff" : p.$tone ?? "#000")};
  background: ${(p) => (p.$on ? "#3399ff" : "#fff")};
`;

const NameFlex = styled.div<{ $sub?: boolean }>`
  display: flex;
  align-items: center;
  height: 18px;
  padding-left: 2px;
  span { margin-left: ${(p) => (p.$sub ? 4 : 5)}px; }
`;

const ValueCell = styled.td<{ $on?: boolean }>`
  && { padding-left: 2px; white-space: pre; }
  background: ${(p) => (p.$on ? "#deedfd" : "#fff")};
`;

const Swatch = styled.div<{ $c: string }>`
  height: 14px;
  margin: 0 4px 0 2px;
  border: 1px solid #000;
  background: ${(p) => p.$c};
`;

const BLUE = "#0000c8";
const GRAY = "#8a8a8a";
const props: { n: number; name: string; value?: string; tone?: string; box?: "+" | "-"; sub?: boolean; swatch?: string }[] = [
  { n: 1, name: "名称", value: "JLQ-1" },
  { n: 2, name: "厚度(mm)", value: "320" },
  { n: 3, name: "轴线距左墙皮距离", value: " (160)" },
  { n: 4, name: "水平分布钢筋", tone: BLUE },
  { n: 5, name: "垂直分布钢筋", tone: BLUE },
  { n: 6, name: "拉筋", tone: BLUE },
  { n: 7, name: "备注" },
  { n: 8, name: "其它属性", tone: GRAY, box: "+" },
  { n: 23, name: "锚固搭接", tone: GRAY, box: "+" },
  { n: 38, name: "显示样式", tone: GRAY, box: "-" },
  { n: 39, name: "边框颜色", sub: true, swatch: "#c0c0c0" },
  { n: 40, name: "填充颜色", sub: true, swatch: "#ff0000" },
  { n: 41, name: "不透明度", sub: true, value: "100" },
];

const PropMark = ({ box, sub, last }: { box?: "+" | "-"; sub?: boolean; last?: boolean }) => (
  <svg width={sub ? 24 : 13} height="18" viewBox={sub ? "0 0 24 18" : "0 0 13 18"} aria-hidden="true">
    {sub && <path d={`M6.500 0V${last ? 9 : 18}M6.500 9.500H23`} stroke="#b4b4b4" fill="none" />}
    {box && <path d="M.5 3.500h11v11H.5z" fill="#e9e9e9" stroke="#a8a8a8" />}
    {box && <path d={box === "+" ? "M2 9h8M6 5v8" : "M2 9h8"} stroke="#000" strokeWidth="1.300" />}
  </svg>
);

/* ---------- status bar and popup ---------- */

const Status = styled.footer`
  flex: none;
  height: 20px;
  display: flex;
  align-items: center;
  font-family: ${SONG};
  border-top: 1px solid #d0d0d0;
`;

const StatusCell = styled.span<{ $w?: number }>`
  ${(p) => (p.$w ? `width: ${p.$w}px; flex: none;` : "flex: 1;")}
  height: 18px;
  line-height: 18px;
  padding-left: 3px;
  border-right: 1px solid #c6c6c6;
  background: linear-gradient(#f8f8f8, #efefef);
`;

const Popup = styled.aside`
  position: fixed;
  right: 19px;
  bottom: 0;
  width: 300px;
  height: 196px;
  display: flex;
  flex-direction: column;
  border-radius: 3px 3px 0 0;
  background: #fcfdfe;
  box-shadow: 0 0 6px rgba(0, 0, 0, 0.45);
  overflow: hidden;
`;

const PopupHead = styled.div`
  height: 26px;
  display: flex;
  align-items: center;
  gap: 4px;
  padding: 0 7px 4px 5px;
  background: #069bdc;
  color: #fff;
  font-size: 13px;
  span { flex: 1; }
  button { display: flex; margin-top: 8px; }
`;

const PopupBody = styled.div`
  flex: 1;
  padding: 12px 25px 0;
  color: #666;
  line-height: 18px;
  h2 { color: #000; font-size: 16px; line-height: 24px; text-align: center; margin-bottom: 7px; padding-left: 10px; }
`;

const PopupFoot = styled.div`
  height: 39px;
  display: flex;
  justify-content: flex-end;
  gap: 5px;
  padding: 7px 8px 0 0;
  border-top: 1px solid #dbe6ee;
  button {
    display: flex;
    align-items: center;
    justify-content: center;
    gap: 2px;
    height: 24px;
    border-radius: 2px;
    background: #3da2f6;
    color: #fff;
  }
  button:first-child { width: 84px; }
  button:last-child { width: 77px; }
`;

const MENUS = ["文件(F)", "编辑(E)", "楼层(L)", "构件(N)", "绘图(D)", "修改(M)", "钢筋量(Q)", "视图(V)", "工具(T)", "云应用(Y)", "BIM应用(I)", "在线服务(S)", "帮助(H)", "版本号(B)"];

export default function App() {
  return (
    <Frame>
      <Global />
      <TitleBar>
        <Icon name="app" />
        <TitleText>广联达BIM钢筋算量软件 <span>GGJ2013 - [C:\Users\Administrator\Documents\GrandSoft Projects\GGJ\12.0\~9101.tmp]</span></TitleText>
        <WindowButtons>
          <WinButton type="button" aria-label="最小化"><svg width="12" height="5"><path d="M.5.500h11v4H.5z" fill="#fff" stroke="#4d5f77" /></svg></WinButton>
          <WinButton type="button" aria-label="还原"><svg width="12" height="11"><path d="M4.500.500h7v6h-7zM.5 4.500h7v6h-7z" fill="#fff" stroke="#4d5f77" /><path d="M3 7h2v1H3z" fill="#4d5f77" /></svg></WinButton>
          <WinButton type="button" $danger aria-label="关闭窗口"><svg width="12" height="10"><path d="m2 1 8 8m0-8L2 9" stroke="#6b2a20" strokeWidth="4" /><path d="m2 1 8 8m0-8L2 9" stroke="#fff" strokeWidth="2.400" /></svg></WinButton>
        </WindowButtons>
      </TitleBar>

      <MenuBar>
        {MENUS.map((m) => <MenuItem type="button" key={m}>{m}</MenuItem>)}
        <Tool icon="docplus">新建变更</Tool>
        <Caret />
        <Tool icon="mascot">广小二</Tool>
        <Account>
          <Tool icon="user">登录</Tool>
          <Caret />
          <Tool>造价豆:0</Tool>
          <Tool icon="bell" label="消息" />
          <Tool icon="chat">我要建议</Tool>
        </Account>
      </MenuBar>

      <ToolbarLine>
        <Bar $w={153} $pad={1}>
          <Tool icon="fresh" label="新建" />
          <Tool icon="open" label="打开" />
          <Caret />
          <Tool icon="save" label="保存" />
          <Sep />
          <Tool icon="undo" label="撤销" />
          <Caret />
          <More />
        </Bar>
        <Bar $w={550}>
          <Tool icon="define">定义</Tool>
          <Tool icon="sigma">汇总计算</Tool>
          <Tool icon="cloud">云检查</Tool>
          <Tool icon="slab">平齐板顶</Tool>
          <Tool icon="binoc">查找图元</Tool>
          <Tool icon="glasses">查看钢筋量</Tool>
          <Tool icon="batch">批量选择</Tool>
          <More />
        </Bar>
        <Bar>
          <Tool icon="plane">二维</Tool>
          <Caret />
          <Tool icon="cube">俯视</Tool>
          <Caret />
          <Tool icon="orbit">动态观察</Tool>
          <Tool icon="cube3">局部三维</Tool>
          <Sep />
          <Tool icon="full">全屏</Tool>
          <Tool icon="zoom">缩放</Tool>
          <Caret />
          <Tool icon="hand">平移</Tool>
          <Caret />
          <Tool icon="screen">屏幕旋转</Tool>
          <Caret tight />
          <Sep />
          <Tool icon="floors">选择楼层</Tool>
          <More />
        </Bar>
      </ToolbarLine>

      <Main>
        <Column $w={165} $gap={4}>
          <Head title="模块导航栏" blue />
          <NavButton type="button">工程设置</NavButton>
          <NavButton type="button">绘图输入</NavButton>
          <TreeTools>
            <button type="button" aria-label="全部展开"><Icon name="plusplus" /></button>
            <button type="button" aria-label="全部折叠"><Icon name="minusminus" /></button>
          </TreeTools>
          <TreeBox>
            <TreeList>
              {tree.map((f) => (
                <li key={f.name}>
                  <TreeRow>
                    <Box open={f.open} />
                    <Dots $w={6} />
                    <Icon name={f.open ? "folderOpen" : "folder"} />
                    <TreeText>{f.name}</TreeText>
                  </TreeRow>
                  {f.items && (
                    <SubList>
                      {f.items.map(([name, icon]) => (
                        <li key={name}>
                          <TreeRow>
                            <Dots $w={11} />
                            <Icon name={icon} />
                            <TreeText $on={name === "剪力墙(Q)"}>{name}</TreeText>
                          </TreeRow>
                        </li>
                      ))}
                    </SubList>
                  )}
                </li>
              ))}
            </TreeList>
            <VScroll>
              <Arrow dir="u" />
              <Thumb $v $len={81} $off={5}><Ridges v /></Thumb>
              <Spacer />
              <Arrow dir="d" />
            </VScroll>
            <HScroll>
              <Arrow dir="l" />
              <Thumb $len={100} $off={7}><Ridges /></Thumb>
              <Arrow dir="r" />
            </HScroll>
          </TreeBox>
          <NavButton type="button">单构件输入</NavButton>
          <NavButton type="button">报表预览</NavButton>
          <Orb />
        </Column>

        <Column $w={165} $gap={3}>
          <Head title="图纸管理" />
          <SheetPane>
            <Tabs>
              <Tab type="button" $on>图纸文件列表</Tab>
              <Tab type="button">图纸楼层对照</Tab>
              <SmallButton type="button" $w={17} $h={17} aria-label="上一页签"><Arrow dir="l" /></SmallButton>
              <SmallButton type="button" $w={17} $h={17} aria-label="下一页签"><Arrow dir="r" /></SmallButton>
            </Tabs>
            <SheetBody>
              <SheetTools>
                <SmallButton type="button" $w={59}>添加图纸</SmallButton>
                <SmallButton type="button" $w={13} aria-label="添加选项"><Down /></SmallButton>
                <SmallButton type="button" $w={59}>整理图纸</SmallButton>
                <SmallButton type="button" $w={13} aria-label="更多"><Chevrons /></SmallButton>
              </SheetTools>
              <SheetTable>
                <thead><tr><th /><th>图纸名称</th></tr></thead>
                <tbody><tr><th>1</th><td>基础平面图(当前图纸)</td></tr></tbody>
              </SheetTable>
              <Spacer />
              <HScroll>
                <Arrow dir="l" />
                <Thumb $len={15} $off={7} />
                <Arrow dir="r" />
              </HScroll>
            </SheetBody>
          </SheetPane>
          <Head title="CAD图层显示" />
          <LayerList>
            <li><Box /><Dots $w={4} /><Icon name="layer" size={14} /><span>已提取的CAD图层</span></li>
            <li><Box /><Dots $w={4} /><Icon name="layer" size={14} /><span>CAD原始图层</span></li>
          </LayerList>
        </Column>

        <Column>
          <DockBar $h={26}>
            <Grip />
            <Tool icon="erase">删除</Tool>
            <Sep />
            <Tool icon="copy">复制</Tool>
            <Tool icon="mirror">镜像</Tool>
            <Sep />
            <Tool icon="move">移动</Tool>
            <Tool icon="rotate">旋转</Tool>
            <Sep />
            <Tool icon="extend">延伸</Tool>
            <Tool icon="trim">修剪</Tool>
            <Sep />
            <Tool icon="brk">打断</Tool>
            <Tool icon="merge">合并</Tool>
            <Tool icon="split" off>分割</Tool>
            <Sep />
            <Tool icon="align">对齐</Tool>
            <Caret tight />
            <Tool icon="offset">偏移</Tool>
            <Tool icon="stretch">拉伸</Tool>
            <More />
          </DockBar>
          <DockBar $h={29}>
            <Grip />
            <Combo w={60} value="基础层" label="楼层" />
            <Combo w={72} value="墙" label="构件类别" />
            <Combo w={72} value="剪力墙" label="构件类型" />
            <Combo w={73} value="JLQ-1" label="构件" />
            <Sep />
            <Tool icon="prop" active>属性</Tool>
            <Tool icon="edit" active>编辑钢筋</Tool>
            <Tool icon="list">构件列表</Tool>
            <Tool icon="pick">拾取构件</Tool>
            <Grip $mid />
            <Tool icon="twopt">两点</Tool>
            <Tool icon="par">平行</Tool>
            <Tool icon="ang">点角</Tool>
            <Caret />
            <More />
          </DockBar>
          <DockBar $h={29} $end={14}>
            <Grip />
            <Tool icon="select" active>选择</Tool>
            <Caret />
            <Sep />
            <Tool icon="ray">直线</Tool>
            <Tool icon="arclen">点加长度</Tool>
            <Tool icon="arc">三点画弧</Tool>
            <Caret />
            <Combo w={57} value="" label="画弧方式" />
            <Tool icon="plane">矩形</Tool>
            <Sep />
            <Tool icon="smart">智能布置</Tool>
            <Caret tight />
            <Sep />
            <Tool icon="wall">修改墙段属性</Tool>
            <Tool icon="mark">查改标高</Tool>
            <More />
            <Grip />
          </DockBar>
          <Canvas><Plan /></Canvas>
          <DockBar $h={31}>
            <Grip />
            <Tool icon="ortho">正交</Tool>
            <Tool icon="snap" active>对象捕捉</Tool>
            <Tool icon="dyn" active>动态输入</Tool>
            <Grip $mid />
            <Tool icon="cross">交点</Tool>
            <Tool icon="perp" active>垂点</Tool>
            <Tool icon="mid" active>中点</Tool>
            <Tool icon="vertex">顶点</Tool>
            <Tool icon="coord">坐标</Tool>
            <Grip $mid />
            <Combo w={61} value="不偏移" label="偏移方式" />
            <Sep />
            <Spin label="X=" />
            <Unit>mm</Unit>
            <Spin label="Y=" />
            <More />
          </DockBar>
          <RebarPane>
            <RebarGrip>
              <button type="button" aria-label="关闭面板">
                <svg width="11" height="11"><path d="M.5.500h10v10H.5z" fill="#fff" stroke="#333" /><path d="m2 2 7 7m0-7L2 9" stroke="#7c2740" strokeWidth="1.500" /></svg>
              </button>
            </RebarGrip>
            <RebarBody>
              <DockBar $h={28}>
                <Tool icon="first" label="首条" />
                <Tool icon="prev" label="上一条" />
                <Tool icon="next" label="下一条" />
                <Tool icon="last" label="末条" />
                <Sep />
                <Tool icon="up" label="上移" />
                <Tool icon="down" label="下移" />
                <Sep />
                <Tool icon="insert" off>插入</Tool>
                <Tool icon="remove" off>删除</Tool>
                <Tool icon="scale" off>缩尺配筋</Tool>
                <Tool icon="info" off>钢筋信息</Tool>
                <Tool icon="lib">钢筋图库</Tool>
                <Tool icon="other">其他</Tool>
                <Caret tight />
                <Tool>关闭</Tool>
                <Sep />
                <Total>单构件钢筋总重(kg)：0</Total>
              </DockBar>
              <RebarArea>
                <RebarTable>
                  <colgroup><Col $w={32} /><Col $w={73} /><Col $w={36} /><Col $w={33} /><Col $w={201} /><Col $w={166} /><col /></colgroup>
                  <thead>
                    <tr><th /><th>筋号</th><th>级别</th><th>图号</th><th>图形</th><th>计算公式</th><th>公式描述</th></tr>
                  </thead>
                  <tbody>
                    <tr><th>1*</th><td /><td /><td /><td /><td /><td /></tr>
                  </tbody>
                </RebarTable>
                <HScroll>
                  <Arrow dir="l" />
                  <Thumb $len={192} $off={78}><Ridges /></Thumb>
                  <Arrow dir="r" />
                </HScroll>
              </RebarArea>
            </RebarBody>
          </RebarPane>
        </Column>

        <Column $w={265}>
          <Head title="属性编辑器" />
          <PropBox>
            <PropTable>
              <colgroup><Col $w={21} /><Col $w={121} /><col /></colgroup>
              <thead><tr><th /><th>属性名称</th><th>属性值</th></tr></thead>
              <tbody>
                {props.map((p) => (
                  <tr key={p.n}>
                    <NumCell $on={p.n === 1}>{p.n}</NumCell>
                    <NameCell $tone={p.tone} $on={p.n === 1}>
                      <NameFlex $sub={p.sub}>
                        <PropMark box={p.box} sub={p.sub} last={p.n === 41} />
                        <span>{p.name}</span>
                      </NameFlex>
                    </NameCell>
                    <ValueCell $on={p.n === 1}>{p.swatch ? <Swatch $c={p.swatch} /> : p.value}</ValueCell>
                  </tr>
                ))}
              </tbody>
            </PropTable>
          </PropBox>
        </Column>
      </Main>

      <Status>
        <StatusCell $w={149}>X=165748 Y=63490</StatusCell>
        <StatusCell $w={80}>层高:1.5m</StatusCell>
        <StatusCell $w={100}>底标高:-11.5m</StatusCell>
        <StatusCell $w={50}>1(1)</StatusCell>
        <StatusCell>按鼠标左键指定第一个角点，或拾取构件图元</StatusCell>
        <StatusCell $w={24}>S</StatusCell>
      </Status>

      <Popup>
        <PopupHead>
          <Icon name="qq" size={14} />
          <span>腾讯视频</span>
          <button type="button" aria-label="关闭提示"><svg width="9" height="9"><path d="m.5.500 8 8m0-8-8 8" stroke="#fff" strokeWidth="1.800" /></svg></button>
        </PopupHead>
        <PopupBody>
          <h2>厉害了，word国防部！</h2>
          <p>看国防部十大霸气回应！有理有据，有力有<br />节，见招拆招！国防部霸气“亮剑”，每一句都掷<br />地有声，每一条都尽显大国风范。</p>
        </PopupBody>
        <PopupFoot>
          <button type="button">立即观看</button>
          <button type="button"><Icon name="star" size={14} />关注</button>
        </PopupFoot>
      </Popup>
    </Frame>
  );
}
